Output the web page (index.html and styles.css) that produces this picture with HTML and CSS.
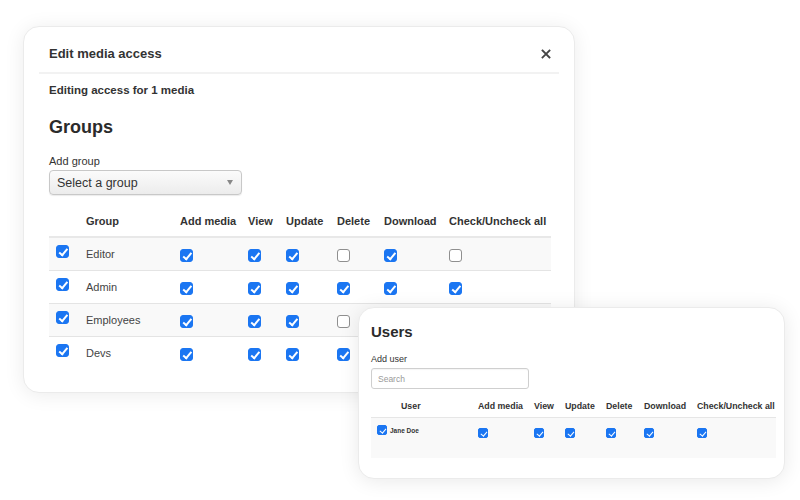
FILE: index.html
```html
<!DOCTYPE html>
<html lang="en">
<head>
<meta charset="utf-8">
<title>Edit media access</title>
<link rel="stylesheet" href="styles.css">
</head>
<body>
<div class="stage">
  <section class="modal">
    <header class="modal-head">
      <h1 class="modal-title">Edit media access</h1>
      <button class="close" aria-label="Close">
        <svg width="10" height="10" viewBox="0 0 10 10"><path d="M1.5 1.5 L8.5 8.5 M8.5 1.5 L1.5 8.5" stroke="#444" stroke-width="1.8" stroke-linecap="square" fill="none"/></svg>
      </button>
    </header>
    <div class="modal-body">
      <p class="subtitle">Editing access for 1 media</p>
      <h2 class="section-title">Groups</h2>
      <div class="field-label">Add group</div>
      <div class="select"><span>Select a group</span><span class="caret"></span></div>

      <div class="gtable">
        <div class="grow ghead">
          <div></div><div>Group</div><div>Add media</div><div>View</div><div>Update</div><div>Delete</div><div>Download</div><div>Check/Uncheck all</div>
        </div>
        <div class="grow stripe">
          <div class="first"><span class="cb on"></span></div><div class="name">Editor</div>
          <div><span class="cb on"></span></div><div><span class="cb on"></span></div><div><span class="cb on"></span></div><div><span class="cb"></span></div><div><span class="cb on"></span></div><div><span class="cb"></span></div>
        </div>
        <div class="grow">
          <div class="first"><span class="cb on"></span></div><div class="name">Admin</div>
          <div><span class="cb on"></span></div><div><span class="cb on"></span></div><div><span class="cb on"></span></div><div><span class="cb on"></span></div><div><span class="cb on"></span></div><div><span class="cb on"></span></div>
        </div>
        <div class="grow stripe">
          <div class="first"><span class="cb on"></span></div><div class="name">Employees</div>
          <div><span class="cb on"></span></div><div><span class="cb on"></span></div><div><span class="cb on"></span></div><div><span class="cb"></span></div><div><span class="cb on"></span></div><div><span class="cb on"></span></div>
        </div>
        <div class="grow">
          <div class="first"><span class="cb on"></span></div><div class="name">Devs</div>
          <div><span class="cb on"></span></div><div><span class="cb on"></span></div><div><span class="cb on"></span></div><div><span class="cb on"></span></div><div><span class="cb on"></span></div><div><span class="cb on"></span></div>
        </div>
      </div>
    </div>
  </section>

  <section class="users">
    <h2 class="users-title">Users</h2>
    <div class="users-label">Add user</div>
    <div class="search">Search</div>
    <div class="utable">
      <div class="urow uhead">
        <div class="ulabel">User</div><div>Add media</div><div>View</div><div>Update</div><div>Delete</div><div>Download</div><div>Check/Uncheck all</div>
      </div>
      <div class="urow ubody">
        <div class="ufirst"><span class="cb small on"></span><span class="uname">Jane Doe</span></div>
        <div><span class="cb small on"></span></div><div><span class="cb small on"></span></div><div><span class="cb small on"></span></div><div><span class="cb small on"></span></div><div><span class="cb small on"></span></div><div><span class="cb small on"></span></div>
      </div>
    </div>
  </section>
</div>
</body>
</html>
```
FILE: styles.css
```css
* { box-sizing: border-box; }
html, body { margin: 0; padding: 0; background: #fff; }
body {
  font-family: "Liberation Sans", Arial, Helvetica, sans-serif;
  color: #333;
}
.stage {
  position: relative;
  width: 800px;
  height: 500px;
  overflow: hidden;
  padding: 26px 0 0 23px;
}

/* main modal */
.modal {
  width: 552px;
  height: 367px;
  background: #fff;
  border: 1px solid #ebebeb;
  border-radius: 16px;
  box-shadow: 0 2px 20px rgba(0, 0, 0, 0.08);
  padding: 0 15px;
}
.modal-head {
  display: flex;
  align-items: center;
  justify-content: space-between;
  padding: 18px 8px 9px 10px;
  border-bottom: 2px solid #f2f2f2;
}
.modal-title {
  margin: 0;
  font-size: 13px;
  line-height: 18px;
  font-weight: bold;
  color: #333;
}
.close {
  border: 0;
  background: none;
  padding: 0;
  width: 10px;
  height: 10px;
  display: flex;
}
.modal-body { padding: 0 8px 0 10px; }
.subtitle {
  margin: 9px 0 0;
  font-size: 11.5px;
  line-height: 14px;
  font-weight: bold;
  color: #333;
}
.section-title {
  margin: 19px 0 0;
  font-size: 18px;
  line-height: 22px;
  font-weight: bold;
  color: #2b2b2b;
}
.field-label {
  margin-top: 16px;
  font-size: 11px;
  line-height: 14px;
  color: #333;
}
.select {
  margin-top: 2px;
  width: 193px;
  height: 25px;
  display: flex;
  align-items: center;
  justify-content: space-between;
  padding: 0 8px 0 7px;
  border: 1px solid #c8c8c8;
  border-radius: 4px;
  background: linear-gradient(#fbfbfb, #ececec);
  box-shadow: 0 1px 1px rgba(0, 0, 0, 0.08);
  font-size: 12.5px;
  color: #333;
}
.caret {
  width: 0;
  height: 0;
  border-left: 3px solid transparent;
  border-right: 3px solid transparent;
  border-top: 5px solid #888;
}

/* groups table */
.gtable { margin-top: 13px; width: 502px; }
.grow {
  display: grid;
  grid-template-columns: 37px 94px 68px 38px 51px 47px 65px 102px;
  height: 33px;
  align-items: center;
  border-top: 1px solid #e4e4e4;
  font-size: 11px;
  color: #444;
  white-space: nowrap;
}
.grow > div { display: flex; align-items: center; }
.grow.ghead {
  height: 30px;
  border-top: 0;
  border-bottom: 2px solid #e8e8e8;
  font-weight: bold;
  color: #333;
  padding-bottom: 2px;
}
.ghead + .grow { border-top: 0; height: 32px; }
.grow.stripe { background: #f9f9f9; }
.grow > .first { align-self: start; padding: 7px 0 0 7px; }
.grow > div > .cb { margin-top: 2px; }
.grow > .first > .cb { margin-top: 0; }

/* checkbox */
.cb {
  position: relative;
  display: inline-block;
  width: 13px;
  height: 13px;
  border-radius: 3px;
  border: 1px solid #8f8f8f;
  background: #fff;
  flex: none;
}
.cb.on {
  background: #1b76f2;
  border-color: #1b76f2;
}
.cb.on::after {
  content: "";
  position: absolute;
  left: 3.5px;
  top: 1px;
  width: 3px;
  height: 6.5px;
  border: solid #fff;
  border-width: 0 2px 2px 0;
  transform: rotate(40deg);
}
.cb.small { width: 10px; height: 10px; border-radius: 2px; }
.cb.small.on::after {
  left: 2.5px;
  top: 0.5px;
  width: 2.5px;
  height: 5px;
  border-width: 0 1.6px 1.6px 0;
}

/* users card */
.users {
  position: absolute;
  left: 358px;
  top: 307px;
  width: 427px;
  height: 172px;
  background: #fff;
  border: 1px solid #ebebeb;
  border-radius: 16px;
  box-shadow: 0 2px 20px rgba(0, 0, 0, 0.09);
  padding: 15px 8px 0 12px;
}
.users-title {
  margin: 0;
  font-size: 15px;
  line-height: 18px;
  font-weight: bold;
  color: #2b2b2b;
}
.users-label {
  margin-top: 13px;
  font-size: 9px;
  line-height: 11px;
  color: #333;
}
.search {
  margin-top: 3px;
  width: 158px;
  height: 21px;
  border: 1px solid #cfcfcf;
  border-radius: 3px;
  padding-left: 6px;
  display: flex;
  align-items: center;
  font-size: 8.5px;
  color: #9a9a9a;
  box-shadow: inset 0 1px 1px rgba(0, 0, 0, 0.04);
}
.utable { margin-top: 5px; width: 405px; }
.urow {
  display: grid;
  grid-template-columns: 107px 56px 31px 41px 38px 53px 79px;
  white-space: nowrap;
}
.uhead {
  height: 24px;
  align-items: center;
  border-bottom: 1px solid #e6e6e6;
  font-size: 8.8px;
  font-weight: bold;
  color: #333;
}
.ulabel { padding-left: 30px; }
.ubody {
  height: 40px;
  background: #f9f9f9;
  align-items: start;
}
.ubody > div { padding-top: 10px; display: flex; }
.ubody > .ufirst {
  padding: 7px 0 0 6px;
  align-items: center;
  gap: 3px;
}
.uname {
  font-size: 6.5px;
  font-weight: bold;
  color: #333;
}
```
